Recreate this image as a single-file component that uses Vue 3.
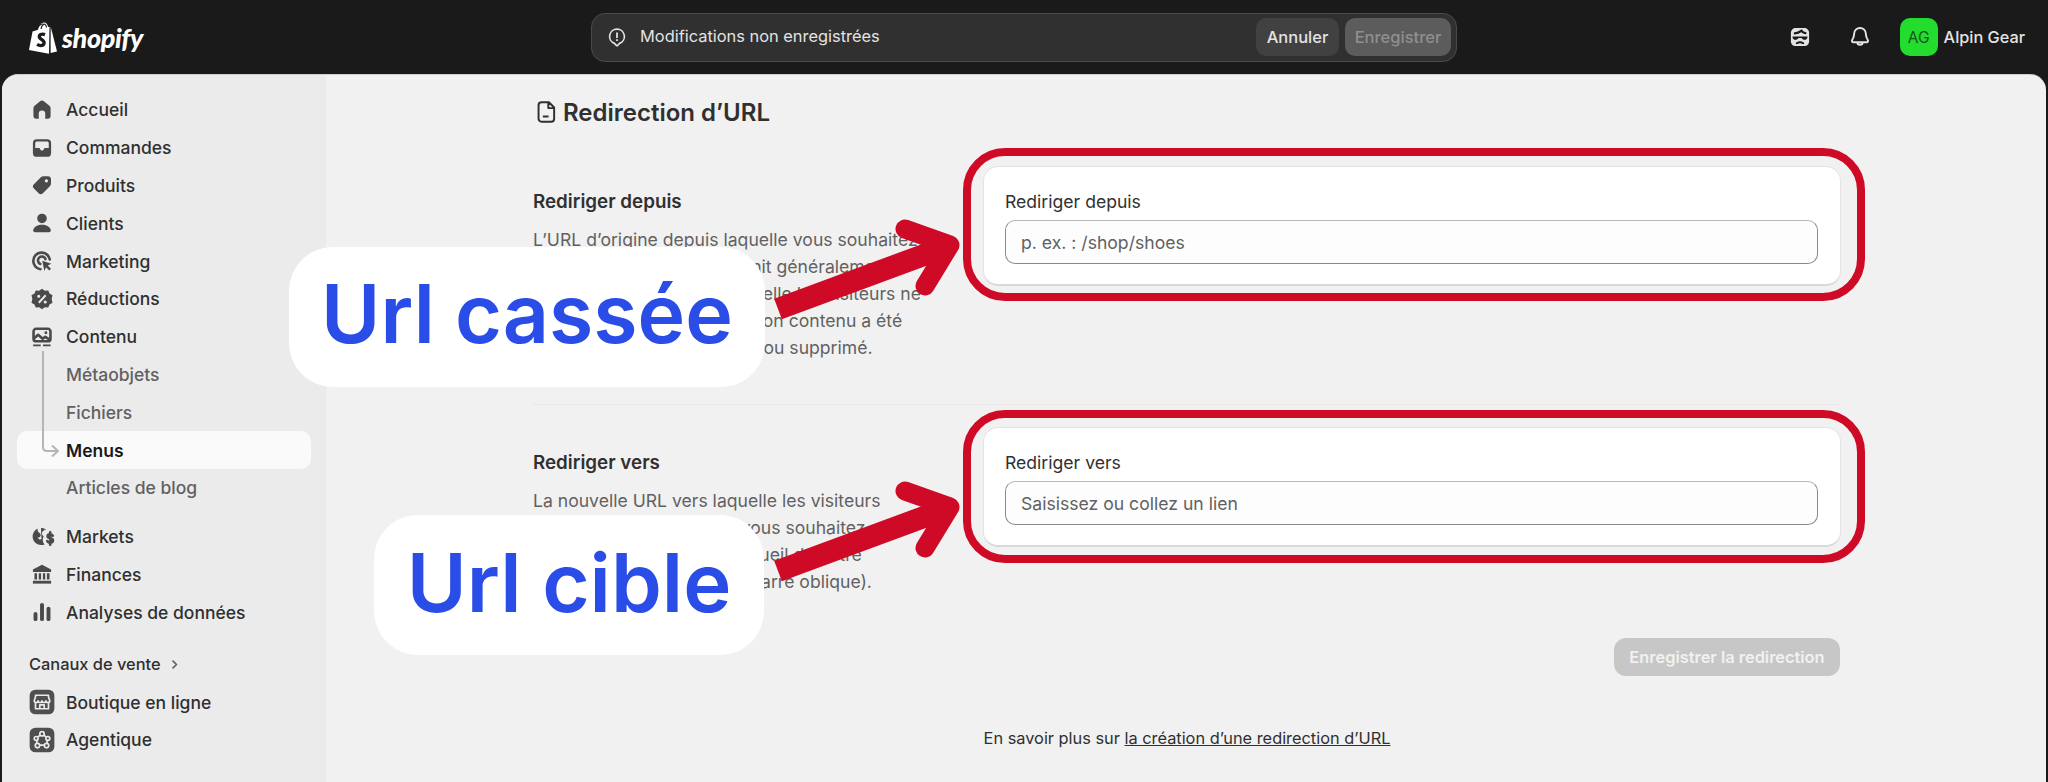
<script setup>
// icons are drawn on a 20x20 grid
const icons = {
  home: { fill: ["M8.3 3.4a2.6 2.6 0 0 1 3.4 0l4 3.4a2.5 2.5 0 0 1 .9 1.9v5.8a2.2 2.2 0 0 1-2.2 2.2h-1.9v-3.9a2.5 2.5 0 0 0-5 0v3.9H5.6a2.2 2.2 0 0 1-2.2-2.2V8.7a2.5 2.5 0 0 1 .9-1.9z"] },
  orders: { fill: ["M6 3.2h8a3 3 0 0 1 3 3v7.6a3 3 0 0 1-3 3H6a3 3 0 0 1-3-3V6.2a3 3 0 0 1 3-3zM6 5a1.2 1.2 0 0 0-1.2 1.2V10h2.700c.6 0 .9.4 1.100.9.2.6.8 1 1.400 1s1.200-.4 1.400-1c.2-.5.5-.9 1.100-.9h2.700V6.200A1.200 1.200 0 0 0 14 5z"] },
  tag: { fill: ["M11 3.200h3.600a2.300 2.300 0 0 1 2.300 2.300v3.600c0 .7-.3 1.300-.7 1.700l-5.500 5.500a2.300 2.300 0 0 1-3.300 0l-3.600-3.600a2.300 2.300 0 0 1 0-3.300l5.500-5.500c.5-.4 1.100-.7 1.700-.7zM13.400 5.500a1.300 1.300 0 1 0 0 2.600 1.300 1.300 0 0 0 0-2.600z"] },
  person: { fill: ["M10 2.800a3.700 3.700 0 1 1 0 7.400 3.700 3.700 0 0 1 0-7.400z", "M10 11.400c3.200 0 5.900 1.500 6.700 3.700.4 1-.4 2-1.500 2H4.800c-1.100 0-1.900-1-1.500-2 .8-2.200 3.500-3.700 6.700-3.700z"] },
  marketing: {
    fill: ["M10.200 9.800l7 2.400-2.800 1.300 2.500 2.500-1.300 1.300-2.500-2.500-1.300 2.800z"],
    line: ["M8.800 16.300A6.400 6.400 0 1 1 16 8.800", "M8.700 12.300A3 3 0 1 1 12.700 8.500"],
    thick: true,
  },
  discount: {
    fill: ["M10 2.200l2.200 1.500 2.600-.3 1 2.400 2.300 1.400-.7 2.800.7 2.800-2.300 1.400-1 2.400-2.600-.3-2.200 1.500-2.200-1.500-2.600.3-1-2.400-2.300-1.400.7-2.800-.7-2.800 2.300-1.400 1-2.400 2.600.3zM12.300 6.600l-5.300 5.800 1.100 1 5.300-5.800zM7.500 6.700a1.200 1.200 0 1 0 0 2.400 1.200 1.200 0 0 0 0-2.400zm5 4.400a1.200 1.200 0 1 0 0 2.400 1.200 1.200 0 0 0 0-2.400z"],
  },
  content: {
    fill: ["M3.200 15.700h5.800v1.400H3.200zM10.800 15.700h5.800v1.400h-5.800z"],
    line: ["M5.500 3.700h9a2 2 0 0 1 2 2v5.600a2 2 0 0 1-2 2h-9a2 2 0 0 1-2-2V5.700a2 2 0 0 1 2-2z", "M4 11l3-2.700 3.500 3 2-1.500 3 2"],
    dots: [[13, 6.700, 1.100]],
    thick: true,
  },
  markets: {
    fill: ["M9.200 3c1.500 0 2.900.4 4 1.200-1.600.3-3 1.300-3.200 2.800-.2 1.300.7 2 1.300 2.800-.8 1.200-1 2.900-.4 4.200.3.700.7 1.200 1.100 1.700-.9.300-1.800.5-2.800.5A6.600 6.600 0 0 1 6.800 3.500c-.6 1.300-.1 2.500 1 3.200 1.200.7 1.600 1.800.9 3-.5.800-1.200 1-2.100.5 1 1.700 1.900 2.300 3 1.200z"],
    line: ["M18.300 9c-.5-.7-1.200-1.100-2-1.100-1.100 0-2 .6-2 1.500 0 2.300 4.100 1 4.100 3.300 0 1-.9 1.600-2.100 1.600-.9 0-1.700-.4-2.200-1.100M16.300 6.400v9.600"],
    thick: true,
  },
  finances: { fill: ["M10 2.800l7 3.700v2H3v-2z", "M4.200 9.500h2v4.700h-2zM7.500 9.500h1.800v4.700H7.500zM10.700 9.500h1.800v4.700h-1.800zM13.800 9.500h2v4.700h-2z", "M3 15.200h14V17.400H3z"] },
  analytics: { fill: ["M3.500 11.500a1.500 1.500 0 0 1 3 0v4a1.500 1.500 0 0 1-3 0z", "M8.500 4.500a1.500 1.500 0 0 1 3 0v11a1.500 1.500 0 0 1-3 0z", "M13.500 7.500a1.500 1.500 0 0 1 3 0v8a1.500 1.500 0 0 1-3 0z"] },
  store: {
    line: ["M5 4.800h10v1.400l1 2.800c0 .9-.8 1.400-1.500 1.400s-1.500-.5-1.500-1.300c0 .8-.8 1.300-1.500 1.300S10 9.900 10 9.100c0 .8-.8 1.300-1.500 1.300S7 9.900 7 9.100c0 .8-.8 1.300-1.500 1.300S4 9.900 4 9l1-2.800z", "M5 10.400v4.800h10v-4.800", "M8.300 15.200v-3h3.400v3"],
  },
  agent: {
    line: ["M10 5.200L5.700 8.500M10 5.200l4.300 3.300M5.700 8.500l.7 5.500M14.300 8.500l-.7 5.500M6.400 14h7.200"],
    rings: [[10, 5.2, 1.7], [5.5, 8.8, 1.5], [14.5, 8.8, 1.5], [6.5, 14.3, 1.7], [13.5, 14.3, 1.7]],
  },
};

const mainNav = [
  { label: "Accueil", icon: icons.home },
  { label: "Commandes", icon: icons.orders },
  { label: "Produits", icon: icons.tag },
  { label: "Clients", icon: icons.person },
  { label: "Marketing", icon: icons.marketing },
  { label: "Réductions", icon: icons.discount },
  { label: "Contenu", icon: icons.content },
];
const subNav = [
  { label: "Métaobjets" },
  { label: "Fichiers" },
  { label: "Menus", active: true },
  { label: "Articles de blog" },
];
const secondNav = [
  { label: "Markets", icon: icons.markets },
  { label: "Finances", icon: icons.finances },
  { label: "Analyses de données", icon: icons.analytics },
];
const channels = [
  { label: "Boutique en ligne", icon: icons.store },
  { label: "Agentique", icon: icons.agent },
];

const sections = [
  {
    title: "Rediriger depuis",
    placeholder: "p. ex. : /shop/shoes",
    lines: [
      "L’URL d’origine depuis laquelle vous souhaitez",
      "rediriger le trafic. Il se définit généralement",
      "comme étant la page à laquelle les visiteurs ne",
      "peuvent plus accéder, car son contenu a été",
      "déplacé de façon définitive ou supprimé.",
    ],
  },
  {
    title: "Rediriger vers",
    placeholder: "Saisissez ou collez un lien",
    lines: [
      "La nouvelle URL vers laquelle les visiteurs",
      "doivent être redirigés. Si vous souhaitez",
      "rediriger vers la page d’accueil de votre",
      "boutique, saisissez une / (barre oblique).",
    ],
  },
];
</script>

<template>
  <div class="page">
    <header class="topbar">
      <div class="brand">
        <svg class="bag" viewBox="0 0 30 33" aria-hidden="true">
          <path fill="#fff" d="M21.5 5.7l-1.300.4C19.500 3.600 18.300 1.500 16 1.500c-3.200 0-5.700 3.700-6.700 7.500l-4.100 1.300c-.6.200-.7.300-.8.900L1 29l20 3.800z" />
          <path fill="#fff" d="M22.700 5.800l6.300 24.700-6.400 1.500z" />
          <path fill="none" stroke="#1a1a1a" stroke-width="1.1" d="M9.300 9c.7-3 2.800-5.700 5.400-6.200M13 8c.4-2 1.400-4 2.900-5 1.700.2 2.500 2.500 2.600 3.500" />
          <path fill="none" stroke="#1a1a1a" stroke-width="3.3" d="M17 13.600c-3.400-1.300-6.200.4-5.600 2.600.5 2 5 2.700 4.700 5.800-.3 2.700-3.700 3.400-7 1.400" />
        </svg>
        <span class="wordmark">shopify</span>
      </div>

      <div class="savebar">
        <svg class="save-icon" viewBox="0 0 20 20" aria-hidden="true">
          <path fill="none" stroke="#e3e3e3" stroke-width="1.5" d="M10 2.800a6.700 6.700 0 0 1 2.300 13l-1.700 1.800c-.3.300-.9.300-1.200 0l-1.700-1.800A6.700 6.700 0 0 1 10 2.800z" />
          <path fill="#e3e3e3" d="M9.200 6h1.600v5H9.200zM9.200 12h1.600v1.600H9.200z" />
        </svg>
        <span class="save-text">Modifications non enregistrées</span>
        <button class="btn-cancel">Annuler</button>
        <button class="btn-save">Enregistrer</button>
      </div>

      <div class="account">
        <svg class="top-icon" viewBox="0 0 20 20" aria-hidden="true">
          <path fill="#e3e3e3" d="M7 3h6c2.500 0 4 1.500 4 4v6c0 2.500-1.500 4-4 4H7c-2.500 0-4-1.500-4-4V7c0-2.500 1.500-4 4-4z" />
          <path fill="none" stroke="#1a1a1a" stroke-width="1.7" stroke-linecap="round" d="M6 7.200c2.500-.2 4-1.200 5.200-2 .5 1 1.500 1.600 3 1.800" />
          <path fill="#1a1a1a" d="M4.300 9.600h11.400v1c-.3 1-1.100 1.600-2.200 1.600-1 0-1.800-.5-2.300-1.400H8.800c-.5.900-1.300 1.400-2.300 1.400-1.100 0-1.900-.6-2.200-1.600z" />
          <path fill="none" stroke="#1a1a1a" stroke-width="1.5" stroke-linecap="round" d="M7.500 14.800c1.500-1 3.500-1 5 0" />
        </svg>
        <svg class="top-icon bell" viewBox="0 0 20 20" aria-hidden="true">
          <path fill="none" stroke="#e3e3e3" stroke-width="1.5" stroke-linejoin="round" d="M10 3a4.500 4.500 0 0 0-4.500 4.500c0 1.800-.5 3.300-1.500 4.800-.5.800 0 1.700.9 1.700h10.200c.9 0 1.400-.9.900-1.700-1-1.500-1.500-3-1.500-4.800A4.500 4.500 0 0 0 10 3zM8 14.200c0 2.400 4 2.400 4 0" />
        </svg>
        <span class="avatar">AG</span>
        <span class="account-name">Alpin Gear</span>
      </div>
    </header>

    <div class="shell">
      <nav class="sidebar">
        <a v-for="item in mainNav" :key="item.label" class="nav-row">
          <svg class="nav-icon" viewBox="0 0 20 20" aria-hidden="true">
            <path v-for="d in item.icon.fill" :key="d" :d="d" class="ic-fill" fill-rule="evenodd" />
            <path v-for="d in item.icon.line" :key="d" :d="d" class="ic-line" :class="{ thick: item.icon.thick }" />
            <circle v-for="c in item.icon.dots" :key="c[0]" :cx="c[0]" :cy="c[1]" :r="c[2]" class="ic-fill" />
          </svg>
          <span>{{ item.label }}</span>
        </a>

        <div class="subnav">
          <svg class="tree" viewBox="0 0 20 108" aria-hidden="true">
            <path d="M2 0v96c0 2.500 1.500 4 4 4h11M11 94.500l6 5.500-6 5.500" />
          </svg>
          <a
            v-for="item in subNav"
            :key="item.label"
            class="nav-row sub"
            :class="{ active: item.active }"
          >
            <span>{{ item.label }}</span>
          </a>
        </div>

        <div class="nav-group">
          <a v-for="item in secondNav" :key="item.label" class="nav-row">
            <svg class="nav-icon" viewBox="0 0 20 20" aria-hidden="true">
              <path v-for="d in item.icon.fill" :key="d" :d="d" class="ic-fill" fill-rule="evenodd" />
              <path v-for="d in item.icon.line" :key="d" :d="d" class="ic-line" :class="{ thick: item.icon.thick }" />
            </svg>
            <span>{{ item.label }}</span>
          </a>
        </div>

        <div class="channels-title">
          Canaux de vente
          <svg viewBox="0 0 10 10" aria-hidden="true"><path d="M3.500 2l3 3-3 3" /></svg>
        </div>
        <a v-for="item in channels" :key="item.label" class="nav-row">
          <svg class="nav-icon" viewBox="0 0 20 20" aria-hidden="true">
            <rect x="0.5" y="0.5" width="19" height="19" rx="4.5" class="ic-tile" />
            <path v-for="d in item.icon.line" :key="d" :d="d" class="ic-light" />
            <circle v-for="c in item.icon.rings" :key="c[0] + '-' + c[1]" :cx="c[0]" :cy="c[1]" :r="c[2]" class="ic-ring" />
          </svg>
          <span>{{ item.label }}</span>
        </a>
      </nav>

      <main class="main">
        <div class="content">
          <h1 class="page-title">
            <svg viewBox="0 0 20 20" aria-hidden="true">
              <path d="M5.800 2.500h5.700l4 4v8.700a2.300 2.300 0 0 1-2.300 2.300H5.800a2.300 2.300 0 0 1-2.300-2.300V4.800a2.300 2.300 0 0 1 2.300-2.300zM11 3v4h4.500M6.800 13.500h4.400" />
            </svg>
            Redirection d’URL
          </h1>

          <section v-for="s in sections" :key="s.title" class="section">
            <div class="section-info">
              <h2>{{ s.title }}</h2>
              <p v-for="line in s.lines" :key="line">{{ line }}</p>
            </div>
            <div class="card">
              <label>{{ s.title }}</label>
              <input type="text" :placeholder="s.placeholder" />
            </div>
          </section>

          <div class="actions">
            <button class="btn-submit">Enregistrer la redirection</button>
          </div>
          <p class="learn-more">
            En savoir plus sur <a>la création d’une redirection d’URL</a>
          </p>
        </div>
      </main>
    </div>

    <!-- annotations posées par-dessus la capture -->
    <div class="red-frame first"></div>
    <div class="red-frame second"></div>
    <svg class="arrows" viewBox="0 0 2048 782" aria-hidden="true">
      <g v-for="dy in [0, 262]" :key="dy" :transform="`translate(0 ${dy})`">
        <path class="shaft" d="M778 309L943 248" />
        <path class="head" d="M905 229L950 245L925 286" />
      </g>
    </svg>
    <div class="callout first">Url cassée</div>
    <div class="callout second">Url cible</div>
  </div>
</template>

<style>
html,
body {
  margin: 0;
  background: #1a1a1a;
}
</style>

<style scoped>
.page {
  position: relative;
  width: 2048px;
  height: 782px;
  overflow: hidden;
  background: #1a1a1a;
  font-family: Inter, "Liberation Sans", sans-serif;
  color: #303030;
}

.topbar {
  height: 74px;
  display: grid;
  grid-template-columns: 1fr 866px 1fr;
  align-items: center;
}

.brand {
  display: flex;
  align-items: center;
  padding-left: 28px;
  gap: 4px;
}

.bag {
  width: 30px;
  height: 33px;
}

.wordmark {
  font-family: Lato, sans-serif;
  font-style: italic;
  font-weight: 900;
  font-size: 27px;
  letter-spacing: -0.4px;
  color: #fff;
  line-height: 33px;
}

.savebar {
  height: 49px;
  box-sizing: border-box;
  border: 1px solid #4a4a4a;
  border-radius: 14px;
  background: #303030;
  display: flex;
  align-items: center;
  padding: 0 5px 0 14px;
  color: #e3e3e3;
}

.save-icon {
  width: 22px;
  height: 22px;
}

.save-text {
  flex: 1;
  margin-left: 12px;
  margin-bottom: 2px;
  font-size: 16.4px;
}

.savebar button {
  height: 38px;
  border: none;
  border-radius: 10px;
  font: 500 16.5px Inter, sans-serif;
}

.btn-cancel {
  width: 83px;
  background: #414141;
  color: #e3e3e3;
}

.btn-save {
  width: 106px;
  margin-left: 6px;
  background: #5c5c5c;
  color: #8f8f8f;
}

.account {
  display: flex;
  align-items: center;
  justify-content: flex-end;
  padding-right: 23px;
}

.top-icon {
  width: 26px;
  height: 26px;
}

.top-icon.bell {
  margin-left: 34px;
}

.avatar {
  margin-left: 27px;
  width: 38px;
  height: 38px;
  border-radius: 10px;
  background: #22dd2e;
  color: #11561a;
  font-size: 15.5px;
  display: flex;
  align-items: center;
  justify-content: center;
}

.account-name {
  margin-left: 6px;
  font-size: 16.3px;
  font-weight: 500;
  color: #e3e3e3;
}

.shell {
  display: flex;
  height: 708px;
  margin: 0 2px;
  border-radius: 16px 16px 0 0;
  border-top: 1px solid #cfcfcf;
  box-sizing: border-box;
  overflow: hidden;
  background: #f1f1f1;
}

.sidebar {
  width: 324px;
  flex: none;
  box-sizing: border-box;
  background: #ebebeb;
  padding: 16px 15px 0;
}

.nav-row {
  height: 37.8px;
  display: flex;
  align-items: center;
  gap: 11px;
  font-size: 17.5px;
  font-weight: 500;
  color: #303030;
  padding-left: 12px;
  border-radius: 10px;
  box-sizing: border-box;
}

.nav-icon {
  width: 26px;
  height: 26px;
  flex: none;
}

.ic-fill {
  fill: #4a4a4a;
}

.ic-line {
  fill: none;
  stroke: #4a4a4a;
  stroke-width: 1.6;
  stroke-linecap: round;
  stroke-linejoin: round;
}

.ic-line.thick {
  stroke-width: 2;
}

.ic-tile {
  fill: #4f4f4f;
}

.ic-light,
.ic-ring {
  fill: none;
  stroke: #ebebeb;
  stroke-width: 1.3;
  stroke-linejoin: round;
}

.ic-ring {
  fill: #4f4f4f;
}

.subnav {
  position: relative;
}

.tree {
  position: absolute;
  left: 24px;
  top: -5px;
  width: 20px;
  height: 108px;
  z-index: 1;
}

.tree path {
  fill: none;
  stroke: #b5b5b5;
  stroke-width: 2;
  stroke-linejoin: round;
}

.nav-row.sub {
  padding-left: 49px;
  color: #616161;
}

.nav-row.sub.active {
  background: #fafafa;
  color: #1a1a1a;
  font-weight: 600;
}

.nav-group {
  margin-top: 11px;
}

.channels-title {
  display: flex;
  align-items: center;
  gap: 7px;
  height: 38px;
  margin-top: 14px;
  padding-left: 12px;
  font-size: 16.4px;
  font-weight: 500;
}

.channels-title svg {
  width: 13px;
  height: 13px;
  fill: none;
  stroke: #616161;
  stroke-width: 1.2;
}

.main {
  flex: 1;
  min-width: 0;
}

.content {
  width: 1308px;
  margin-left: 207px;
}

.page-title {
  display: flex;
  align-items: center;
  gap: 3px;
  margin: 0;
  height: 62px;
  padding: 6px 0 0 1px;
  font-size: 24px;
  font-weight: 600;
  color: #303030;
}

.page-title svg {
  width: 26px;
  height: 26px;
  fill: none;
  stroke: #303030;
  stroke-width: 1.5;
  stroke-linejoin: round;
}

.section {
  display: flex;
  padding: 23px 0 43px;
  border-bottom: 1px solid #e8e8e8;
}

.section + .section {
  padding-top: 22px;
  border-bottom: none;
}

.section-info {
  width: 450px;
  flex: none;
  padding-top: 24px;
}

.section-info h2 {
  margin: 0 0 12px;
  font-size: 18.8px;
  line-height: 24px;
  font-weight: 600;
  color: #303030;
}

.section-info p {
  margin: 0;
  font-size: 17.6px;
  line-height: 27px;
  color: #616161;
  white-space: nowrap;
}

.card {
  flex: 1;
  align-self: flex-start;
  box-sizing: border-box;
  height: 120px;
  background: #fff;
  border-radius: 15px;
  border: 1px solid #e3e3e3;
  border-bottom: 2px solid #d9d9d9;
  padding: 23px 22px 0 21px;
}

.card label {
  display: block;
  font-size: 17.6px;
  line-height: 24px;
  margin-bottom: 6px;
  color: #303030;
}

.card input {
  display: block;
  width: 100%;
  height: 44px;
  box-sizing: border-box;
  padding: 0 15px;
  border: 1px solid #8a8a8a;
  border-top-color: #b8b8b8;
  border-radius: 10px;
  background: #fdfdfd;
  font: 400 17.6px Inter, sans-serif;
  outline: none;
}

.card input::placeholder {
  color: #616161;
  opacity: 1;
}

.actions {
  display: flex;
  justify-content: flex-end;
  padding-right: 1px;
}

.btn-submit {
  width: 226px;
  height: 38px;
  border: none;
  border-radius: 12px;
  background: #c7c7c7;
  color: #f1f1f1;
  font: 600 16.4px Inter, sans-serif;
}

.learn-more {
  margin: 52px 0 0;
  text-align: center;
  font-size: 16.35px;
  line-height: 20px;
  color: #303030;
}

.learn-more a {
  text-decoration: underline;
}

.red-frame {
  position: absolute;
  left: 963px;
  width: 902px;
  height: 153px;
  box-sizing: border-box;
  border: 8.5px solid #cf0a26;
  border-radius: 42px;
}

.red-frame.first {
  top: 148px;
}

.red-frame.second {
  top: 410px;
}

.arrows {
  position: absolute;
  left: 0;
  top: 0;
  width: 2048px;
  height: 782px;
  pointer-events: none;
}

.shaft {
  fill: none;
  stroke: #cf0a26;
  stroke-width: 22;
}

.head {
  fill: none;
  stroke: #cf0a26;
  stroke-width: 19;
  stroke-linecap: round;
  stroke-linejoin: round;
}

.callout {
  position: absolute;
  box-sizing: border-box;
  display: flex;
  align-items: center;
  justify-content: center;
  background: #fff;
  border-radius: 44px;
  font-size: 80.6px;
  font-weight: 600;
  color: #2a4de8;
  height: 140px;
}

.callout.first {
  left: 289px;
  top: 247px;
  width: 476px;
  padding-bottom: 7px;
}

.callout.second {
  left: 374px;
  top: 515px;
  width: 390px;
  padding-bottom: 5px;
  font-size: 81.5px;
}
</style>
